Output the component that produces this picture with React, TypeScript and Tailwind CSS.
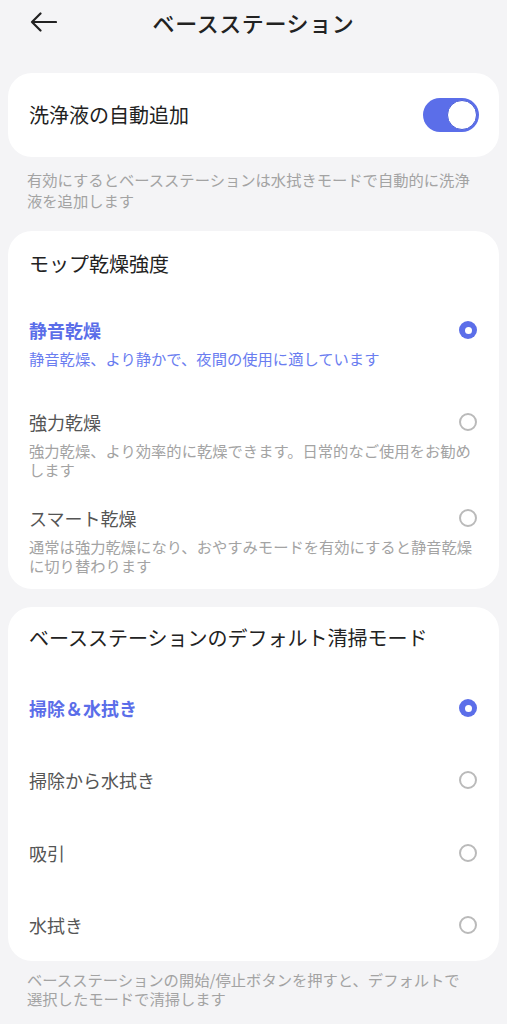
import { useState } from "react";

type Option = {
  id: string;
  label: string;
  desc?: string;
  gap: string;
};

const dryOptions: Option[] = [
  {
    id: "quiet",
    label: "静音乾燥",
    desc: "静音乾燥、より静かで、夜間の使用に適しています",
    gap: "mt-[40px]"
  },
  {
    id: "strong",
    label: "強力乾燥",
    desc: "強力乾燥、より効率的に乾燥できます。日常的なご使用をお勧めします",
    gap: "mt-[42px]"
  },
  {
    id: "smart",
    label: "スマート乾燥",
    desc: "通常は強力乾燥になり、おやすみモードを有効にすると静音乾燥に切り替わります",
    gap: "mt-[27px]"
  }
];

const modeOptions = [
  { id: "both", label: "掃除＆水拭き" },
  { id: "then", label: "掃除から水拭き" },
  { id: "vac", label: "吸引" },
  { id: "mop", label: "水拭き" }
];

function Radio({ checked }: { checked: boolean }) {
  return checked ? (
    <span className="flex h-[18px] w-[18px] shrink-0 items-center justify-center rounded-full bg-[#5b6ee9]">
      <span className="h-[7px] w-[7px] rounded-full bg-white" />
    </span>
  ) : (
    <span className="h-[18px] w-[18px] shrink-0 rounded-full border-[2px] border-[#bababa]" />
  );
}

export default function App() {
  const [autoAdd, setAutoAdd] = useState(true);
  const [dry, setDry] = useState("quiet");
  const [mode, setMode] = useState("both");

  return (
    <div
      className="min-h-[1024px] w-[507px] bg-[#f4f4f6] text-[#222]"
      style={{ fontFamily: '"Noto Sans CJK JP", "Noto Sans", sans-serif' }}
    >
      <header className="grid h-[44px] grid-cols-[1fr_auto_1fr] items-center">
        <button type="button" className="ml-[30px] flex h-[26px] w-[28px] items-center">
          <svg width="27" height="20" viewBox="0 0 27 20" fill="none" aria-hidden="true">
            <path
              d="M26 10H2M10.5 1.5L2 10l8.5 8.5"
              stroke="#222"
              strokeWidth="2.2"
              strokeLinecap="round"
              strokeLinejoin="round"
            />
          </svg>
        </button>
        <h1 className="text-[22px] font-medium leading-[28px] tracking-[0.6px]">
          ベースステーション
        </h1>
        <div />
      </header>

      <section className="mx-2 mt-[29px] flex h-[84px] items-center justify-between rounded-[24px] bg-white pl-[21px] pr-[20px]">
        <span className="text-[20px] leading-[28px]">洗浄液の自動追加</span>
        <button
          type="button"
          onClick={() => setAutoAdd(!autoAdd)}
          className={`flex h-[34px] w-[56px] items-center rounded-full px-[2px] ${
            autoAdd ? "justify-end bg-[#5b6ee9]" : "justify-start bg-[#d6d6d6]"
          }`}
        >
          <span className="h-[30px] w-[30px] rounded-full border border-[#4b5fd8] bg-white" />
        </button>
      </section>
      <p className="mt-[12px] px-[27px] text-[15.3px] leading-[21px] text-[#a3a3a3]">
        有効にするとベースステーションは水拭きモードで自動的に洗浄液を追加します
      </p>

      <section className="mx-2 mt-[20px] rounded-[24px] bg-white pb-[14px] pl-[21px] pr-[22px] pt-[19px]">
        <h2 className="text-[20px] leading-[28px]">モップ乾燥強度</h2>
        {dryOptions.map((option) => {
          const selected = option.id === dry;
          return (
            <button
              key={option.id}
              type="button"
              onClick={() => setDry(option.id)}
              className={`block w-full text-left ${option.gap}`}
            >
              <div className="flex h-[24px] items-center justify-between">
                <span
                  className={`text-[18px] leading-[24px] ${
                    selected ? "font-bold text-[#5b6ee9]" : "text-[#555]"
                  }`}
                >
                  {option.label}
                </span>
                <Radio checked={selected} />
              </div>
              <p
                className={`mt-[7px] pr-[2px] text-[15.3px] leading-[19px] ${
                  selected ? "text-[#6a7df0]" : "text-[#a3a3a3]"
                }`}
              >
                {option.desc}
              </p>
            </button>
          );
        })}
      </section>

      <section className="mx-2 mt-[18px] rounded-[24px] bg-white pl-[21px] pr-[22px] pt-[17px]">
        <h2 className="text-[20px] leading-[28px]">ベースステーションのデフォルト清掃モード</h2>
        <div className="mt-[20px]">
          {modeOptions.map((option) => {
            const selected = option.id === mode;
            return (
              <button
                key={option.id}
                type="button"
                onClick={() => setMode(option.id)}
                className="flex h-[72.3px] w-full items-center justify-between text-left"
              >
                <span
                  className={`text-[18px] leading-[24px] ${
                    selected ? "font-bold text-[#5b6ee9]" : "text-[#555]"
                  }`}
                >
                  {option.label}
                </span>
                <Radio checked={selected} />
              </button>
            );
          })}
        </div>
      </section>
      <p className="mt-[9px] pl-[27px] pr-[40px] text-[15.3px] leading-[19px] text-[#a3a3a3]">
        ベースステーションの開始/停止ボタンを押すと、デフォルトで選択したモードで清掃します
      </p>
    </div>
  );
}
